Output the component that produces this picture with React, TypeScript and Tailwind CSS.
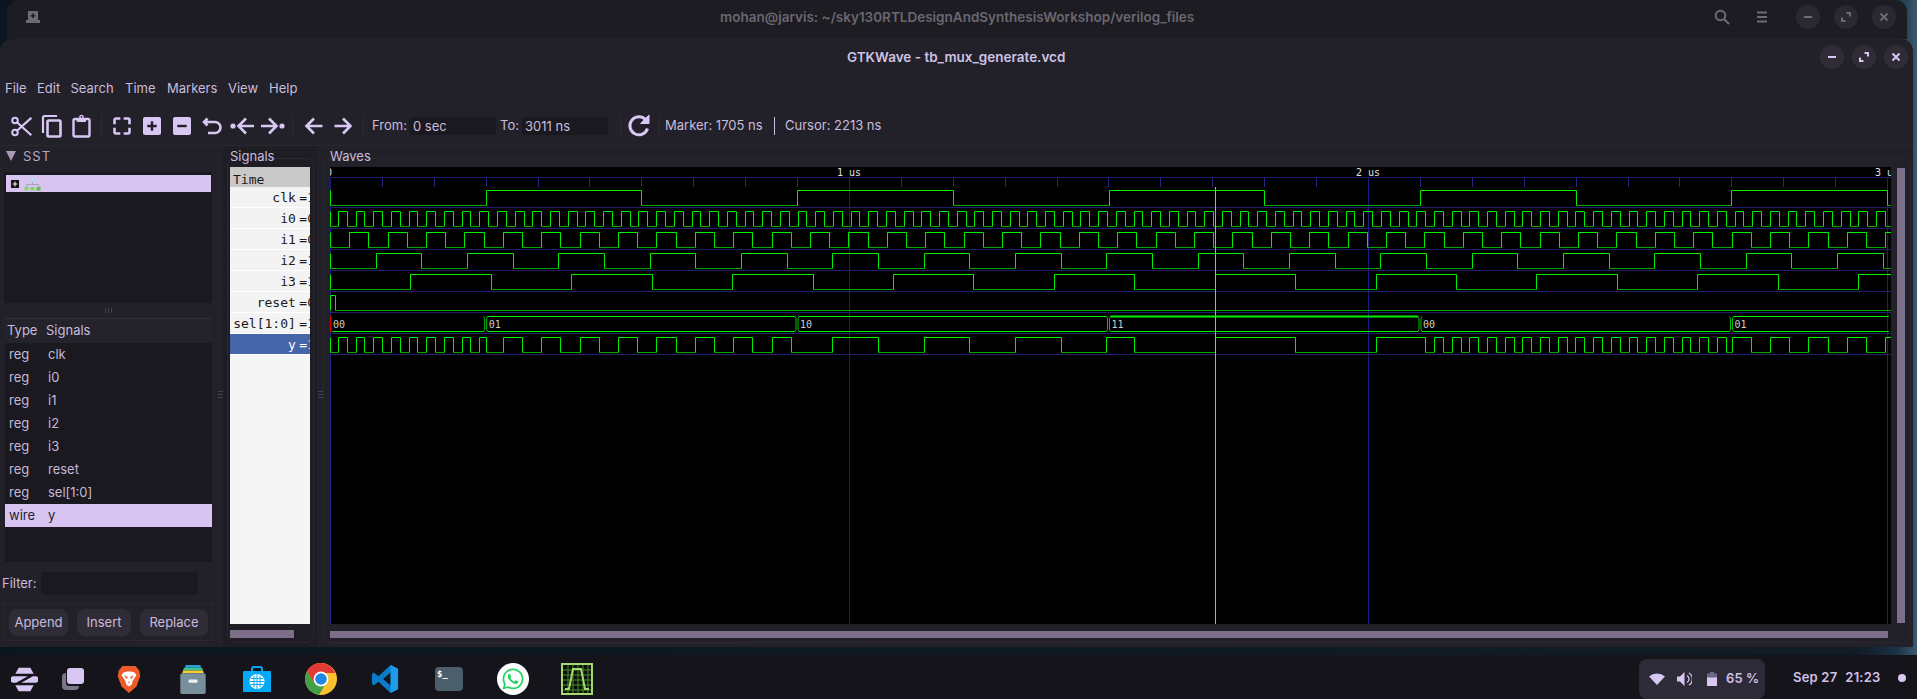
import { FaWhatsapp } from "react-icons/fa"

const X0 = 330
const END = 1891
const Y_TOP = 167
const WAVE_H = 457

type Sig = { init: number; edges: number[] }

const every = (first: number, step: number) => {
    const out: number[] = []
    for (let x = first; x < END; x += step) out.push(x)
    return out
}

const clk: Sig = { init: 0, edges: every(X0 + 155.7, 155.7) }
const i0: Sig = { init: 0, edges: every(337.9, 8.84) }
const i1: Sig = { init: 0, edges: every(X0 + 19.2, 19.2) }
const i2: Sig = { init: 0, edges: every(X0 + 45.67, 45.67) }
const i3: Sig = { init: 0, edges: every(X0 + 80.43, 80.43) }
const reset: Sig = { init: 1, edges: [335.2] }

const busAt = [X0, 485.7, 797, 1108.5, 1420, 1731.5, END]
const busLabels = ["00", "01", "10", "11", "00", "01"]
const busInputs = [i0, i1, i2, i3, i0, i1]

const levelAt = (s: Sig, x: number) => {
    let n = 0
    for (const e of s.edges) if (e <= x) n++
    return (s.init + n) % 2
}

// y is just the mux of the inputs
const muxOut = (): Sig => {
    const edges: number[] = []
    let cur = 0
    for (let k = 0; k < busInputs.length; k++) {
        const a = busAt[k]
        const b = busAt[k + 1]
        const s = busInputs[k]
        if (levelAt(s, a) !== cur) {
            edges.push(a)
            cur = levelAt(s, a)
        }
        for (const e of s.edges) {
            if (e > a && e < b) {
                edges.push(e)
                cur = levelAt(s, e)
            }
        }
    }
    return { init: 0, edges }
}

const rows: Sig[] = [clk, i0, i1, i2, i3, reset]
const singleRows: [Sig, number][] = [...rows.map((s, i) => [s, i] as [Sig, number]), [muxOut(), 7]]

function Wave({ sig, row }: { sig: Sig; row: number }) {
    const hi = 190.5 + 21 * row
    const lo = 205.5 + 21 * row
    const stops = [X0, ...sig.edges, END]
    let high = ""
    let low = ""
    let vert = `M${X0 + 0.5} ${hi}V${lo}`
    let lvl = sig.init
    for (let k = 0; k < stops.length - 1; k++) {
        const a = Math.round(stops[k]) + 0.5
        const b = Math.round(stops[k + 1]) + 0.5
        if (lvl) high += `M${a} ${hi}H${b}`
        else low += `M${a} ${lo}H${b}`
        if (k < stops.length - 2) vert += `M${b} ${hi}V${lo}`
        lvl = 1 - lvl
    }
    return (
        <g fill="none" strokeWidth="1">
            <path d={low} stroke="#00a800" />
            <path d={high} stroke="#00f000" />
            <path d={vert} stroke="#00ec00" />
        </g>
    )
}

function Bus() {
    const top = 316.5
    const bot = 331.5
    return (
        <g fill="none" stroke="#00f000">
            {busLabels.map((label, k) => {
                const a = busAt[k]
                const b = busAt[k + 1]
                const zero = label === "00"
                const thick = label === "11"
                return (
                    <g key={k}>
                        {!zero && <path d={`M${a + 2} ${top}H${b - 2}`} strokeWidth={thick ? 2 : 1} />}
                        <path d={`M${a + 2} ${bot}H${b - 2}`} />
                        {k > 0 && (
                            <path
                                d={`M${a - 2} ${top}L${a - 1} ${top + 2}V${bot - 2}L${a - 2} ${bot}M${a + 2} ${top}L${a + 1} ${top + 2}V${bot - 2}L${a + 2} ${bot}`}
                                strokeWidth="0.8"
                            />
                        )}
                        <text
                            x={a + 3}
                            y="328"
                            fill="#cfcfcf"
                            stroke="none"
                            fontSize="10"
                            fontFamily="'DejaVu Sans Mono', monospace"
                        >
                            {label}
                        </text>
                    </g>
                )
            })}
            <path d={`M${X0 + 0.5} 316V332`} stroke="#e00000" strokeWidth="1.4" />
        </g>
    )
}

function WaveChart() {
    const ticks = every(X0, 51.9)
    const seps = [177, 207, 228, 249, 270, 291, 312, 333, 354]
    return (
        <svg viewBox={`${X0} ${Y_TOP} ${END - X0} ${WAVE_H}`} className="block w-[1561px] h-[457px] bg-black shrink-0">
            {seps.map((y) => (
                <path key={y} d={`M${X0} ${y + 0.5}H${END}`} stroke="#20206e" strokeWidth="1" shapeRendering="crispEdges" />
            ))}
            {ticks.map((x) => (
                <path key={x} d={`M${Math.round(x) + 0.5} 177V187`} stroke="#27277f" strokeWidth="1" shapeRendering="crispEdges" />
            ))}
            {[X0, 849, 1368, 1887].map((x) => (
                <path key={x} d={`M${x + 0.5} 177V624`} stroke="#1e1e82" strokeWidth="1" shapeRendering="crispEdges" />
            ))}
            {singleRows.map(([s, r]) => (
                <Wave key={r} sig={s} row={r} />
            ))}
            <Bus />
            {[
                { x: 326, t: "0" },
                { x: 837, t: "1 us" },
                { x: 1356, t: "2 us" },
                { x: 1875, t: "3 us" },
            ].map((l) => (
                <text key={l.t} x={l.x} y="176" fontSize="10" fill="#e2e2e2" fontFamily="'DejaVu Sans Mono', monospace">
                    {l.t}
                </text>
            ))}
            <path d="M1215.5 187V624" stroke="#f2917f" strokeWidth="1" shapeRendering="crispEdges" />
        </svg>
    )
}

const ic = "#d8c6f3"

function ToolIcon({ w = 22, h = 24, vb = "0 0 24 24", children }: { w?: number; h?: number; vb?: string; children: React.ReactNode }) {
    return (
        <div className="w-[30px] h-[24px] flex items-center justify-center shrink-0">
            <svg width={w} height={h} viewBox={vb} fill="none" stroke={ic} strokeWidth="2.6" strokeLinecap="square" strokeLinejoin="miter">
                {children}
            </svg>
        </div>
    )
}

const Sep = () => <div className="w-px h-[24px] bg-[#2c2a34] mx-[5px] shrink-0" />

function Toolbar() {
    return (
        <div className="h-[45px] pt-[6px] pl-[6px] flex items-center border-b border-[#2a2932] text-[13px] text-[#c9bcdc]">
            <ToolIcon w={21} h={21} vb="0 0 21 21">
                <circle cx="4" cy="4.5" r="2.8" strokeWidth="2" />
                <circle cx="4" cy="16.5" r="2.8" strokeWidth="2" />
                <path d="M6.2 6.5L19.5 18.5M6.2 14.5L19.5 2.5" strokeWidth="2.2" />
            </ToolIcon>
            <ToolIcon w={21} h={24} vb="0 0 21 24">
                <path d="M15 2H3.5A1.5 1.5 0 0 0 2 3.5V18" strokeWidth="2.2" />
                <rect x="6.5" y="6.5" width="13" height="16" rx="1.2" strokeWidth="2.6" />
            </ToolIcon>
            <ToolIcon w={19} h={24} vb="0 0 19 24">
                <rect x="1.5" y="5" width="16" height="17.5" rx="1.5" strokeWidth="2.4" />
                <path d="M5.5 5.5h8v2h-8z" fill={ic} strokeWidth="1" />
                <circle cx="9.5" cy="3" r="1.6" strokeWidth="1.4" />
            </ToolIcon>
            <Sep />
            <ToolIcon w={18} h={18} vb="0 0 18 18">
                <path d="M6 1.5H3A1.5 1.5 0 0 0 1.5 3V6M12 1.5H15A1.5 1.5 0 0 1 16.5 3V6M6 16.5H3A1.5 1.5 0 0 1 1.5 15V12M12 16.5H15A1.5 1.5 0 0 0 16.5 15V12" />
            </ToolIcon>
            <ToolIcon w={18} h={18} vb="0 0 18 18">
                <rect width="18" height="18" rx="2" fill={ic} stroke="none" />
                <path d="M9 5.5V12.5M5.5 9H12.5" stroke="#22212a" strokeWidth="2.4" />
            </ToolIcon>
            <ToolIcon w={18} h={18} vb="0 0 18 18">
                <rect width="18" height="18" rx="2" fill={ic} stroke="none" />
                <path d="M5.5 9H12.5" stroke="#22212a" strokeWidth="2.4" />
            </ToolIcon>
            <ToolIcon w={20} h={18} vb="0 0 20 18">
                <path d="M5.5 1.5L2 5L5.5 8.5M2.5 5H13a5.5 5.5 0 0 1 0 11H6" strokeLinecap="butt" />
            </ToolIcon>
            <ToolIcon w={25} h={18} vb="0 0 25 18">
                <circle cx="3" cy="9" r="2.6" fill={ic} stroke="none" />
                <path d="M24 9H9M16 1.5L8.5 9L16 16.5" strokeLinecap="butt" />
            </ToolIcon>
            <ToolIcon w={25} h={18} vb="0 0 25 18">
                <circle cx="22" cy="9" r="2.6" fill={ic} stroke="none" />
                <path d="M1 9H16M9 1.5L16.5 9L9 16.5" strokeLinecap="butt" />
            </ToolIcon>
            <Sep />
            <ToolIcon w={19} h={18} vb="0 0 19 18">
                <path d="M18.5 9H3M10 1.5L2.5 9L10 16.5" strokeLinecap="butt" />
            </ToolIcon>
            <ToolIcon w={19} h={18} vb="0 0 19 18">
                <path d="M.5 9H16M9 1.5L16.5 9L9 16.5" strokeLinecap="butt" />
            </ToolIcon>
            <Sep />
            <span className="ml-[3px] w-[37px]">From:</span>
            <div className="w-[87px] h-[18px] rounded bg-[#1a1920] pl-[4px] leading-[18px]">0 sec</div>
            <span className="ml-[4px] w-[22px]">To:</span>
            <div className="w-[86px] h-[18px] rounded bg-[#1a1920] pl-[3px] leading-[18px]">3011 ns</div>
            <div className="w-px h-[24px] bg-[#2c2a34] ml-[12px] shrink-0" />
            <div className="w-[36px] flex justify-center shrink-0">
                <svg width="24" height="24" viewBox="0 0 24 24" fill="none" stroke={ic} strokeWidth="3">
                    <path d="M20.5 14.5A9 9 0 1 1 18.4 5.5" />
                    <path d="M22 1V9.5H13.5Z" fill={ic} strokeWidth="1" />
                </svg>
            </div>
            <div className="w-px h-[24px] bg-[#2c2a34] ml-[2px] shrink-0" />
            <span className="ml-[5px] w-[103px]">Marker: 1705 ns</span>
            <div className="w-px h-[18px] bg-[#c9bcdc] ml-[6px] shrink-0" />
            <span className="ml-[10px]">Cursor: 2213 ns</span>
        </div>
    )
}

const listRows = [
    ["reg", "clk"],
    ["reg", "i0"],
    ["reg", "i1"],
    ["reg", "i2"],
    ["reg", "i3"],
    ["reg", "reset"],
    ["reg", "sel[1:0]"],
    ["wire", "y"],
]

function SstPanel() {
    return (
        <div className="w-[217px] shrink-0 text-[13px] text-[#c9bcdc]">
            <div className="h-[26px] flex items-center pl-[6px] pb-[4px] gap-[7px]">
                <svg width="10" height="10" viewBox="0 0 10 10" className="shrink-0 -mt-[2px]">
                    <path d="M0 0H10L5 10Z" fill="#a99bb8" />
                </svg>
                <span className="tracking-[1px] text-[#b3a7c2]">SST</span>
            </div>
            <div className="ml-[4px] w-[208px] h-[131px] bg-[#1a1920] pt-[3px] pl-[2px]">
                <div className="w-[205px] h-[17px] bg-[#d7c4f1] flex items-center pl-[5px] gap-[5px]">
                    <svg width="8" height="8" viewBox="0 0 8 8" className="shrink-0">
                        <rect width="8" height="8" fill="#111" />
                        <path d="M4 1.5V6.5M1.5 4H6.5" stroke="#fff" strokeWidth="1" />
                    </svg>
                    <svg width="17" height="14" viewBox="0 0 17 14" className="shrink-0">
                        <rect x="6.5" y="1" width="4" height="4" fill="#b5d9f5" />
                        <path d="M8.5 5V7.5M2.5 10V7.5H14.5V10" stroke="#a8a0b5" fill="none" />
                        <rect x="0.5" y="10" width="4" height="3.5" fill="#86d46f" />
                        <rect x="6.5" y="10" width="4" height="3.5" fill="#86d46f" />
                        <rect x="12.5" y="10" width="4" height="3.5" fill="#5cc04a" />
                    </svg>
                </div>
            </div>
            <div className="h-[15px] flex items-center justify-center gap-[2px] ml-[4px] w-[208px]">
                <div className="w-px h-[5px] bg-[#45424f]" />
                <div className="w-px h-[5px] bg-[#45424f]" />
                <div className="w-px h-[5px] bg-[#45424f]" />
            </div>
            <div className="ml-[5px] w-[207px] h-[244px] bg-[#1a1920]">
                <div className="h-[25px] bg-[#24232b] border-t border-[#2e2c37] flex items-center pl-[2px]">
                    <span className="w-[39px]">Type</span>
                    <span>Signals</span>
                </div>
                {listRows.map(([t, n]) => {
                    const on = n === "y"
                    return (
                        <div
                            key={n}
                            className={
                                on
                                    ? "h-[23px] bg-[#d7c4f1] text-[#26242c] flex items-center pl-[4px]"
                                    : "h-[23px] flex items-center pl-[4px] text-[#c5b8d8]"
                            }
                        >
                            <span className="w-[39px]">{t}</span>
                            <span>{n}</span>
                        </div>
                    )
                })}
            </div>
            <div className="h-[41px] flex items-center pl-[2px] pt-[2px]">
                <span className="w-[39px]">Filter:</span>
                <div className="w-[157px] h-[23px] rounded bg-[#1a1920]" />
            </div>
            <div className="ml-[3px] w-[210px] h-[38px] border border-[#2a2932] flex items-center pl-[5px] pt-[1px] gap-[9px]">
                <div className="w-[59px] h-[27px] rounded-lg bg-[#2f2c38] flex items-center justify-center">Append</div>
                <div className="w-[54px] h-[27px] rounded-lg bg-[#2f2c38] flex items-center justify-center">Insert</div>
                <div className="w-[68px] h-[27px] rounded-lg bg-[#2f2c38] flex items-center justify-center">Replace</div>
            </div>
        </div>
    )
}

const sigRows = [
    ["clk", "1"],
    ["i0", "0"],
    ["i1", "0"],
    ["i2", "1"],
    ["i3", "1"],
    ["reset", "0"],
    ["sel[1:0]", "1"],
    ["y", "1"],
]

function SignalsPanel() {
    return (
        <div className="w-[94px] shrink-0 bg-[#1e1d24] text-[13px] text-[#c9bcdc]">
            <div className="h-[12px] pl-[7px] leading-[20px]">Signals</div>
            <div className="ml-[4px] w-[87px] h-[485px] rounded-lg border border-[#2a2932] pt-[8px] pl-[2px]">
                <div className="w-[80px] h-[457px] bg-[#f5f5f5] overflow-hidden font-['DejaVu_Sans_Mono',monospace] text-[13px] text-[#1a1a1a]">
                    <div className="h-[20px] bg-[#c9c9c9] pl-[3px] leading-[26px]">Time</div>
                    {sigRows.map(([n, v]) => (
                        <div
                            key={n}
                            className={
                                n === "y"
                                    ? "h-[21px] bg-[#4465a8] text-white flex justify-end leading-[22px] border-b border-white -mb-[1px]"
                                    : "h-[21px] bg-[#f3f3f3] flex justify-end leading-[22px] border-b border-white"
                            }
                        >
                            <span className="shrink-0 whitespace-pre -mr-[5px]">
                                {n}
                                <span className="ml-[3.5px]">={v}</span>
                            </span>
                        </div>
                    ))}
                </div>
                <div className="mt-[6px] w-[64px] h-[8px] bg-[#7b6f8a]" />
            </div>
        </div>
    )
}

function PaneHandle() {
    return (
        <div className="w-[6px] shrink-0 flex flex-col items-center justify-center gap-[2px] pb-[4px]">
            <div className="w-[5px] h-px bg-[#45424f]" />
            <div className="w-[5px] h-px bg-[#45424f]" />
            <div className="w-[5px] h-px bg-[#45424f]" />
        </div>
    )
}

function WavesPanel() {
    return (
        <div className="flex-1 text-[13px] text-[#c9bcdc]">
            <div className="h-[12px] pl-[7px] leading-[20px]">Waves</div>
            <div className="w-[1588px] h-[485px] rounded-lg border border-[#2a2932] pt-[8px] pl-[6px]">
                <div className="flex h-[457px]">
                    <WaveChart />
                    <div className="ml-[6px] mt-[1px] w-[8px] h-[455px] bg-[#7b6f8a]" />
                </div>
                <div className="mt-[7px] w-[1558px] h-[7px] bg-[#7b6f8a]" />
            </div>
        </div>
    )
}

function WinBtn({ kind, dim }: { kind: "min" | "max" | "close"; dim?: boolean }) {
    const c = dim ? "#6e6a75" : ic
    return (
        <div className={dim ? "w-[24px] h-[24px] rounded-full bg-[#2a2830] flex items-center justify-center" : "w-[24px] h-[24px] rounded-full bg-[#2f2c38] flex items-center justify-center"}>
            <svg width="10" height="10" viewBox="0 0 10 10" fill="none" stroke={c} strokeWidth="2">
                {kind === "min" && <path d="M1 5H9" />}
                {kind === "max" && <path d="M5.5 1H9V4.5M4.5 9H1V5.5" />}
                {kind === "close" && <path d="M1.5 1.5L8.5 8.5M8.5 1.5L1.5 8.5" />}
            </svg>
        </div>
    )
}

function BackBar() {
    return (
        <div className="h-[39px] ml-[7px] mr-[10px] rounded-t-xl bg-[#1d1c22] flex items-start relative pt-[5px]">
            <svg width="14" height="12" viewBox="0 0 14 12" className="ml-[19px] mt-[6px] shrink-0">
                <path d="M2 0H12V9H14V12H0V9H2Z" fill="#6e6a75" />
                <path d="M7 2.5V7M4.8 4.8H9.2" stroke="#1d1c22" strokeWidth="1.6" />
            </svg>
            <div className="absolute left-[713px] top-[7px] text-[13.5px] font-semibold text-[#6a6772]">
                mohan@jarvis: ~/sky130RTLDesignAndSynthesisWorkshop/verilog_files
            </div>
            <div className="ml-auto flex items-center mr-[11px]">
                <svg width="16" height="16" viewBox="0 0 16 16" fill="none" stroke="#6e6a75" strokeWidth="2" className="mr-[26px]">
                    <circle cx="6.5" cy="6.5" r="4.8" />
                    <path d="M10 10L15 15" />
                </svg>
                <svg width="12" height="12" viewBox="0 0 12 12" stroke="#6e6a75" strokeWidth="2" className="mr-[28px]">
                    <path d="M1 1.5H11M1 6H11M1 10.5H11" />
                </svg>
                <div className="flex gap-[14px]">
                    <WinBtn kind="min" dim />
                    <WinBtn kind="max" dim />
                    <WinBtn kind="close" dim />
                </div>
            </div>
        </div>
    )
}

function GtkWindow() {
    return (
        <div className="h-[608px] mr-[4px] rounded-t-xl bg-[#22212a] flex flex-col">
            <div className="h-[36px] flex items-center relative">
                <div className="absolute left-[847px] top-[8px] text-[13.5px] font-semibold text-[#d0c2e4]">GTKWave - tb_mux_generate.vcd</div>
                <div className="ml-auto mr-[5px] flex gap-[8px]">
                    <WinBtn kind="min" />
                    <WinBtn kind="max" />
                    <WinBtn kind="close" />
                </div>
            </div>
            <div className="h-[26px] pt-[2px] flex items-center text-[13px] text-[#c9bcdc]">
                <span className="ml-[5px] w-[32px]">File</span>
                <span className="w-[33.5px]">Edit</span>
                <span className="w-[54.5px]">Search</span>
                <span className="w-[42px]">Time</span>
                <span className="w-[61px]">Markers</span>
                <span className="w-[41px]">View</span>
                <span>Help</span>
            </div>
            <Toolbar />
            <div className="flex-1 flex">
                <SstPanel />
                <PaneHandle />
                <SignalsPanel />
                <PaneHandle />
                <WavesPanel />
            </div>
        </div>
    )
}

const Slot = ({ children }: { children: React.ReactNode }) => (
    <div className="w-[64px] h-[32px] flex items-center justify-center shrink-0">{children}</div>
)

function Taskbar() {
    return (
        <div className="h-[44px] bg-[#15141a] flex items-center">
            <div className="flex items-center pt-[4px]">
                <div className="w-[48px] flex justify-center shrink-0">
                    <svg width="27" height="25" viewBox="0 0 32 30" fill="#d8c6f3">
                        <path d="M9 1H23L27 8H5Z" />
                        <path d="M3 11H20L6 19H3A4 4 0 0 1 3 11Z" />
                        <path d="M29 19H12L26 11H29A4 4 0 0 1 29 19Z" />
                        <path d="M5 22H27L23 29H9Z" />
                    </svg>
                </div>
                <div className="w-[48px] ml-[1px] flex justify-center shrink-0">
                    <svg width="22" height="22" viewBox="0 0 22 22">
                        <path d="M0 9A4 4 0 0 1 4 5V15A3 3 0 0 0 7 18H17A4 4 0 0 1 13 22H4A4 4 0 0 1 0 18Z" fill="#7d7589" />
                        <rect x="5" y="0" width="17" height="16" rx="3" fill="#d8c6f3" />
                    </svg>
                </div>
                <Slot>
                    <svg width="24" height="28" viewBox="0 0 24 30">
                        <path d="M5 1H19L23 6L24 12L20 23L12 30L4 23L0 12L1 6Z" fill="#ee5a2b" />
                        <path d="M6 8L10 7H14L18 8L20 11L16 17L15 21L12 23L9 21L8 17L4 11Z" fill="#fff" />
                        <path d="M7 11L11 13L9 15ZM17 11L13 13L15 15ZM11 18H13L12 20Z" fill="#ee5a2b" />
                    </svg>
                </Slot>
                <Slot>
                    <svg width="28" height="29" viewBox="0 0 28 32">
                        <path d="M6 0H22L23 3H5Z" fill="#2aa0d8" />
                        <path d="M4 3H24L25 6H3Z" fill="#3ec48f" />
                        <path d="M3 6H25L26 9H2Z" fill="#f6cf2e" />
                        <rect y="9" width="28" height="23" rx="2" fill="#78909c" />
                        <rect x="9" y="16" width="10" height="3.5" rx="1" fill="#eceff1" />
                    </svg>
                </Slot>
                <Slot>
                    <svg width="28" height="26" viewBox="0 0 28 26">
                        <path d="M9 6V3A2 2 0 0 1 11 1H17A2 2 0 0 1 19 3V6" fill="none" stroke="#03a9f4" strokeWidth="2" />
                        <rect y="5" width="28" height="21" rx="1" fill="#03a9f4" />
                        <circle cx="14" cy="15.5" r="7.5" fill="#fff" />
                        <path d="M11 10V21M14 8V23M17 10V21M8 12.5H20M7 15.5H21M8 18.5H20" stroke="#03a9f4" strokeWidth="1" />
                    </svg>
                </Slot>
                <Slot>
                    <svg width="32" height="32" viewBox="0 0 32 32">
                        <circle cx="16" cy="16" r="16" fill="#fbc02d" />
                        <path d="M16 0A16 16 0 0 0 2.1 8L9 20L16 10H30A16 16 0 0 0 16 0Z" fill="#e53935" />
                        <path d="M2.1 8A16 16 0 0 0 14 31.9L21 20L9 20Z" fill="#43a047" />
                        <circle cx="16" cy="16" r="7.4" fill="#fff" />
                        <circle cx="16" cy="16" r="5.8" fill="#1e88e5" />
                    </svg>
                </Slot>
                <Slot>
                    <svg width="28" height="28" viewBox="0 0 28 30">
                        <path d="M20 0L28 4V26L20 30L7 18L2 22L0 20V10L2 8L7 12Z M20 8L12 15L20 22Z" fill="#0a7cc7" fillRule="evenodd" />
                        <path d="M20 0L28 4V26L20 30Z" fill="#1e9be8" />
                    </svg>
                </Slot>
                <Slot>
                    <div className="w-[28px] h-[24px] rounded-sm bg-[#4a5f6b] pl-[2px] font-['DejaVu_Sans_Mono',monospace] font-bold text-[9px] leading-[14px] text-white">$_</div>
                </Slot>
                <Slot>
                    <div className="w-[32px] h-[32px] rounded-full bg-white flex items-center justify-center">
                        <FaWhatsapp size={24} color="#25d366" />
                    </div>
                </Slot>
                <Slot>
                    <svg width="32" height="32" viewBox="0 0 32 32">
                        <rect x="1" y="1" width="30" height="30" fill="#0c120a" stroke="#a5d86e" strokeWidth="2" />
                        <path d="M7 2V30M12 2V30M17 2V30M22 2V30M27 2V30M2 7H30M2 12H30M2 17H30M2 22H30M2 27H30" stroke="#4a8a30" strokeWidth="1" />
                        <path d="M4 26H8L12 6H20L24 26H28" fill="none" stroke="#a5d86e" strokeWidth="2" />
                    </svg>
                </Slot>
            </div>
            <div className="ml-auto self-end h-[40px] w-[126px] rounded-lg bg-[#2e2b38] flex items-center pl-[10px] text-[13px] font-semibold tracking-[0.1px] text-[#d0c2e4]">
                <svg width="16" height="12" viewBox="0 0 16 12" className="shrink-0">
                    <path d="M8 12L0 3.5A12 12 0 0 1 16 3.5Z" fill="#d8c6f3" />
                </svg>
                <svg width="15" height="14" viewBox="0 0 15 14" className="ml-[12px] shrink-0" fill="none">
                    <path d="M0 4.5H3L7.5 0V14L3 9.5H0Z" fill="#d8c6f3" />
                    <path d="M10 3.5A4 4 0 0 1 10 10.5M12 1A7 7 0 0 1 12 13" stroke="#d8c6f3" strokeWidth="1.3" />
                </svg>
                <svg width="10" height="14" viewBox="0 0 10 14" className="ml-[15px] shrink-0">
                    <path d="M3 0H7V1.5H10V14H0V1.5H3Z" fill="#6f6880" />
                    <path d="M0 5.5H10V14H0Z" fill="#d8c6f3" />
                </svg>
                <span className="ml-[9px]">65 %</span>
            </div>
            <div className="ml-[28px] w-[85px] shrink-0 flex gap-[8px] text-[13px] font-semibold tracking-[0.2px] whitespace-nowrap text-[#d0c2e4] mt-[2px]">
                <span>Sep 27</span>
                <span>21:23</span>
            </div>
            <div className="ml-[20px] mr-[11px] w-[8px] h-[8px] rounded-full bg-[#d8c6f3] mt-[2px] shrink-0" />
        </div>
    )
}

export default function App() {
    return (
        <div className="w-[1917px] h-[699px] overflow-hidden flex flex-col font-['Inter',sans-serif] bg-[linear-gradient(90deg,#0b1720,#111c26_97%,#1b3346_99%,#3b5a70)]">
            <BackBar />
            <GtkWindow />
            <div className="h-[8px]" />
            <Taskbar />
        </div>
    )
}
